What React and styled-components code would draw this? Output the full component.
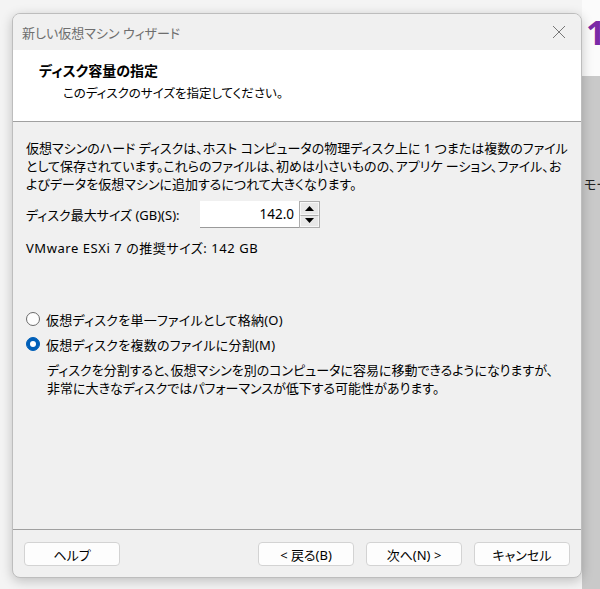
import React, { useState } from 'react'
import styled, { createGlobalStyle } from 'styled-components'

const GlobalStyle = createGlobalStyle`
    html, body {
        margin: 0;
        padding: 0;
        background: #f4f4f4;
    }
    body {
        font-family: "Noto Sans", "Noto Sans CJK JP", sans-serif;
        font-feature-settings: "palt";
        font-size: 13px;
        color: #000;
    }
`

const Desktop = styled.div`
    display: flex;
    width: 600px;
    height: 589px;
    overflow: hidden;
    background: #f4f4f4;
`

const WindowColumn = styled.div`
    flex: 0 0 auto;
    padding: 13px 0 0 12px;
    position: relative;
    z-index: 1;
`

const Window = styled.div`
    width: 568px;
    height: 563px;
    display: flex;
    flex-direction: column;
    background: #f0f0f0;
    border: 1px solid #bdbdbd;
    border-radius: 8px;
    overflow: hidden;
    box-shadow: 0 3px 12px rgba(0, 0, 0, 0.22);
`

const TitleBar = styled.div`
    height: 36px;
    display: flex;
    align-items: center;
    justify-content: space-between;
    padding: 0 12px 0 9px;
    background: #f0f0f0;
    color: #6e6e6e;
    font-size: 13px;
`

const CloseButton = styled.div`
    width: 16px;
    height: 16px;
    display: flex;
    align-items: center;
    justify-content: center;
    margin-right: 2px;
`

const Header = styled.div`
    height: 72px;
    background: #fff;
    border-bottom: 1px solid #a0a0a0;
    padding: 11px 0 0 26px;
    box-sizing: border-box;
`

const HeaderTitle = styled.div`
    font-weight: 700;
    font-size: 14px;
    line-height: 20px;
`

const HeaderSub = styled.div`
    margin: 3px 0 0 24px;
    line-height: 20px;
    font-size: 12.5px;
`

const Body = styled.div`
    flex: 1;
    padding: 17px 13px 0 13px;
`

const Para = styled.p`
    margin: 0;
    line-height: 18px;
    white-space: nowrap;
`

const SizeRow = styled.div`
    display: flex;
    align-items: center;
    margin-top: 8px;
    height: 27px;
`

const Label = styled.span`
    width: 174px;
`

const NumberBox = styled.div`
    width: 94px;
    height: 26px;
    background: #fff;
    border-bottom: 1px solid #9a9a9a;
    display: flex;
    align-items: center;
    justify-content: flex-end;
    padding-right: 5px;
    font-size: 13.5px;
`

const Spinner = styled.div`
    width: 19px;
    height: 25px;
    border: 1px solid #adadad;
    display: flex;
    flex-direction: column;
    background: #f0f0f0;
`

const SpinButton = styled.div`
    flex: 1;
    display: flex;
    align-items: center;
    justify-content: center;
    background: #e8e8e8;
    border: 1px solid #f7f7f7;
    border-top-color: ${p => (p.$down ? '#adadad' : '#f7f7f7')};
`

const Recommend = styled(Para)`
    margin-top: 11px;
    letter-spacing: 0.55px;
`

const Options = styled.div`
    margin-top: 52px;
    display: flex;
    flex-direction: column;
    gap: 5px;
`

const RadioRow = styled.label`
    display: flex;
    align-items: center;
    height: 20px;
    gap: 6px;
    letter-spacing: 0.25px;
    cursor: pointer;
`

const RadioMark = styled.span`
    width: 14px;
    height: 14px;
    box-sizing: border-box;
    border-radius: 50%;
    display: flex;
    align-items: center;
    justify-content: center;
    background: ${p => (p.$on ? '#005fb8' : '#fdfdfd')};
    border: 1px solid ${p => (p.$on ? '#005fb8' : '#6b6b6b')};

    &::after {
        content: '';
        width: 6px;
        height: 6px;
        border-radius: 50%;
        background: #fff;
        display: ${p => (p.$on ? 'block' : 'none')};
    }
`

const Note = styled(Para)`
    margin-top: 7px;
    padding-left: 21px;
`

const Footer = styled.div`
    border-top: 1px solid #a0a0a0;
    display: flex;
    align-items: flex-start;
    gap: 12px;
    padding: 12px 11px 12px 11px;
    height: 48px;
    box-sizing: border-box;
`

const Button = styled.button`
    width: 96px;
    height: 24px;
    background: #fdfdfd;
    border: 1px solid #d3d3d3;
    border-radius: 4px;
    font-family: inherit;
    font-feature-settings: "palt";
    font-size: 13px;
    color: #000;
    padding: 0;
    margin-right: ${p => (p.$push ? 'auto' : '0')};
`

const BackApp = styled.div`
    flex: 1 1 0;
    min-width: 0;
    display: flex;
    flex-direction: column;
    background-color: #c9c9c9;
`

const BackTop = styled.div`
    height: 76px;
    flex-shrink: 0;
    background-color: #fbfbfb;
    padding: 12px 0 0 4px;
    box-sizing: border-box;
`

const BigDigit = styled.span`
    font-family: "Noto Sans", sans-serif;
    font-weight: 700;
    font-size: 34px;
    line-height: 40px;
    color: #7b2aa6;
`

const BackText = styled.div`
    padding: 98px 0 0 2px;
    font-size: 13px;
    color: #222;
    white-space: nowrap;
`

function Arrow({ up }) {
    return (
        <svg width="9" height="5" viewBox="0 0 9 5">
            <path d={up ? 'M4.5 0 L9 5 L0 5 Z' : 'M0 0 L9 0 L4.5 5 Z'} fill="#000" />
        </svg>
    )
}

export default function App() {
    const [split, setSplit] = useState(true)
    return (
        <Desktop>
            <GlobalStyle />
            <WindowColumn>
                <Window>
                    <TitleBar>
                        <span>新しい仮想マシン ウィザード</span>
                        <CloseButton>
                            <svg width="14" height="14" viewBox="0 0 14 14">
                                <path d="M1 1 L13 13 M13 1 L1 13" stroke="#777" strokeWidth="1" />
                            </svg>
                        </CloseButton>
                    </TitleBar>
                    <Header>
                        <HeaderTitle>ディスク容量の指定</HeaderTitle>
                        <HeaderSub>このディスクのサイズを指定してください。</HeaderSub>
                    </Header>
                    <Body>
                        <Para>
                            仮想マシンのハード ディスクは、ホスト コンピュータの物理ディスク上に 1 つまたは複数のファイル<br />
                            として保存されています。これらのファイルは、初めは小さいものの、アプリケ ーション、ファイル、お<br />
                            よびデータを仮想マシンに追加するにつれて大きくなります。
                        </Para>
                        <SizeRow>
                            <Label>ディスク最大サイズ (GB)(S):</Label>
                            <NumberBox>142.0</NumberBox>
                            <Spinner>
                                <SpinButton><Arrow up /></SpinButton>
                                <SpinButton $down><Arrow /></SpinButton>
                            </Spinner>
                        </SizeRow>
                        <Recommend>VMware ESXi 7 の推奨サイズ: 142 GB</Recommend>
                        <Options>
                            <RadioRow onClick={() => setSplit(false)}>
                                <RadioMark $on={!split} />
                                仮想ディスクを単一ファイルとして格納(O)
                            </RadioRow>
                            <RadioRow onClick={() => setSplit(true)}>
                                <RadioMark $on={split} />
                                仮想ディスクを複数のファイルに分割(M)
                            </RadioRow>
                        </Options>
                        <Note>
                            ディスクを分割すると、仮想マシンを別のコンピュータに容易に移動できるようになりますが、<br />
                            非常に大きなディスクではパフォーマンスが低下する可能性があります。
                        </Note>
                    </Body>
                    <Footer>
                        <Button $push>ヘルプ</Button>
                        <Button>&lt; 戻る(B)</Button>
                        <Button>次へ(N) &gt;</Button>
                        <Button>キャンセル</Button>
                    </Footer>
                </Window>
            </WindowColumn>
            <BackApp>
                <BackTop>
                    <BigDigit>1</BigDigit>
                </BackTop>
                <BackText>モー</BackText>
            </BackApp>
        </Desktop>
    )
}
